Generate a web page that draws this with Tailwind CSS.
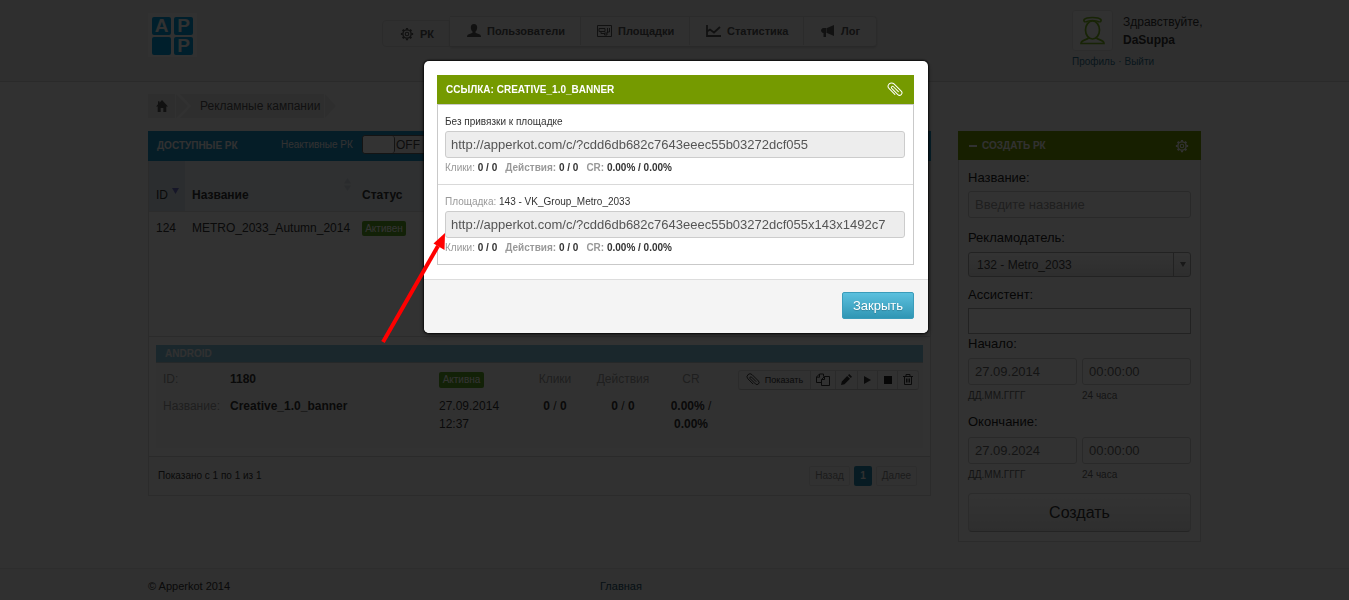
<!DOCTYPE html>
<html lang="ru">
<head>
    <meta charset="UTF-8">
    <meta name="viewport" content="width=device-width, initial-scale=1.0">
    <title>Apperkot - Рекламные кампании</title>
    <script src="https://cdn.jsdelivr.net/npm/@tailwindcss/browser@4"></script>
</head>
<body class="bg-[#f5f5f5] font-['Liberation_Sans',Arial,sans-serif] text-[12px] leading-[18px] text-[#333] overflow-hidden">

    <!-- shared icons -->
    <svg class="hidden">
        <symbol id="clip" viewBox="0 0 16 16">
            <path transform="rotate(45 8 8)" d="M11.500 6.800H4.600a1.200 1.200 0 0 0 0 2.400h8.600a2.400 2.400 0 0 0 0-4.800H3a3.400 3.400 0 0 0 0 6.800h8" fill="none" stroke="currentColor" stroke-linecap="round"/>
        </symbol>
        <symbol id="gear" viewBox="0 0 16 16">
            <circle cx="8" cy="8" r="4.700" fill="none" stroke="currentColor" stroke-width="1.600"/>
            <circle cx="8" cy="8" r="2" fill="none" stroke="currentColor" stroke-width="1.300"/>
            <g stroke="currentColor" stroke-width="2.400">
                <path d="M8 1v2M8 13v2M1 8h2M13 8h2M3.050 3.050l1.400 1.400M11.550 11.550l1.400 1.400M3.050 12.950l1.400-1.400M11.550 4.450l1.400-1.400"/>
            </g>
        </symbol>
    </svg>

    <header class="bg-[#ebebeb] border-b border-[#d2d2d2] h-[82px]">
        <div class="max-w-[1053px] mx-auto flex items-start">
            <a href="#" class="w-[234px] pt-[13px]" aria-label="Apperkot">
                <span class="grid grid-cols-2 gap-x-[3px] gap-y-[2px] w-[49px] h-[44px] p-1 bg-[#f2f2f2] text-[#f2f2f2] font-bold text-[19px] leading-[18px] text-center">
                    <span class="bg-[#009cda] rounded-[2px]">A</span>
                    <span class="bg-[#009cda] rounded-[2px]">P</span>
                    <span class="bg-[#009cda] rounded-[2px]"></span>
                    <span class="bg-[#009cda] rounded-[2px]">P</span>
                </span>
            </a>

            <nav class="flex items-end pt-4 text-[11px] font-bold text-[#555]">
                <a href="#" class="flex items-center gap-[6px] w-[68px] h-[27px] pl-[17px] border border-[#d8d8d8] rounded-l bg-[#e9e9e9]">
                    <svg class="w-[14px] h-[14px]"><use href="#gear"/></svg>РК
                </a>
                <div class="flex h-[31px] border border-[#d8d8d8] border-b-[#cdcdcd] border-l-0 rounded-r bg-[#eee] shadow-sm">
                    <a href="#" class="flex items-center gap-[6px] w-[131px] h-[28px] pl-[17px] border-r border-[#d8d8d8]">
                        <svg class="w-[14px] h-[14px]" viewBox="0 0 14 14" fill="currentColor"><path d="M7 0c2.200 0 3.300 1.500 3.200 3.700C10.100 5.600 9.200 7 8.500 7.500v1.200c1 .7 3.800 1.100 4.700 2.100.6.700.8 1.300.8 2.200H0c0-.9.200-1.500.8-2.200.9-1 3.700-1.400 4.700-2.100V7.500C4.800 7 3.900 5.600 3.800 3.700 3.700 1.500 4.800 0 7 0z"/></svg>
                        Пользователи
                    </a>
                    <a href="#" class="flex items-center gap-[6px] w-[109px] h-[28px] pl-4 border-r border-[#d8d8d8]">
                        <svg class="w-[15px] h-3" viewBox="0 0 15 12" fill="none" stroke="currentColor"><path d="M.5.500h14v11H.5zM2 3.500h6v3H2zM4 6.500v2h3M7.500 8h2.500v2H7.500zM10.500 3v5M12.500 3v4h-2"/></svg>
                        Площадки
                    </a>
                    <a href="#" class="flex items-center gap-[6px] w-[114px] h-[28px] pl-4 border-r border-[#d8d8d8]">
                        <svg class="w-[15px] h-3" viewBox="0 0 15 12" fill="none" stroke="currentColor" stroke-width="1.800"><path d="M1 0v11h14"/><path d="M1 6.500l3-2 4 3 6-5.500"/></svg>
                        Статистика
                    </a>
                    <a href="#" class="flex items-center gap-[6px] w-[72px] h-[28px] pl-[17px]">
                        <svg class="w-[14px] h-[14px]" viewBox="0 0 14 14" fill="currentColor"><path d="M13 1v11L6 9V4zM5.500 4v5H5v4H2.500V9C-.8 8.500-.8 4.500 2.500 4z"/></svg>
                        Лог
                    </a>
                </div>
            </nav>

            <div class="ml-auto w-[129px] pt-[10px]">
                <div class="flex gap-[10px]">
                    <div class="w-[41px] h-[41px] shrink-0 border border-[#ddd] rounded-[3px] bg-[#f2f2f2] flex items-center justify-center text-[#78b41e]">
                        <svg class="w-[25px] h-[29px]" viewBox="0 0 25 29" fill="none" stroke="currentColor" stroke-width="1.700">
                            <path d="M5.500 6C2.500 5 3 1.500 12.500 1.500S22.500 5 19.500 6"/>
                            <path d="M5.500 6c4-1.700 10-1.700 14 0"/>
                            <ellipse cx="12.500" cy="14" rx="7" ry="9"/>
                            <path d="M8.500 22c-1 2-7.500 1.500-7.500 5.500h23c0-4-6.500-3.500-7.500-5.500"/>
                        </svg>
                    </div>
                    <div class="pt-[3px]">Здравствуйте,<br><b>DaSuppa</b></div>
                </div>
                <div class="text-[10px] leading-[22px] text-[#2f6f8c] flex gap-[3px]"><a href="#">Профиль</a>·<a href="#">Выйти</a></div>
            </div>
        </div>
    </header>

    <div class="max-w-[1053px] mx-auto pt-3 h-[486px]">
        <nav class="flex h-6 text-[#555]" aria-label="Навигация">
            <a href="#" class="w-[27px] bg-[#e6e6e6] flex items-center justify-center" aria-label="Домой">
                <svg class="w-3 h-3" viewBox="0 0 12 12" fill="currentColor"><path d="M6 0l6 6.500h-1.700V12H7.300V8H4.700v4H1.700V6.500H0L2 4.300V1.200h1.500v1.500z"/></svg>
            </a>
            <svg class="w-[22px] h-6" viewBox="0 0 22 24" fill="#e6e6e6"><path d="M1 0l12 12L1 24zM5 0h17v24H5l11-12z"/></svg>
            <a href="#" class="bg-[#e6e6e6] w-[127px] leading-6 pl-[3px]">Рекламные кампании</a>
            <svg class="w-3 h-6" viewBox="0 0 12 24" fill="#e6e6e6"><path d="M1 0l11 12L1 24z"/></svg>
        </nav>

        <main class="flex items-start gap-[27px] mt-[13px]">
            <!-- campaigns -->
            <section class="flex-1">
                <div class="h-[30px] bg-[#1a8fc4] text-[#f5f5f5] flex items-center pl-[9px] text-[10px]">
                    <h2 class="font-bold w-[124px]">ДОСТУПНЫЕ РК</h2>
                    <label for="inactive" class="w-[81px] pb-[3px]">Неактивные РК</label>
                    <input id="inactive" type="checkbox" class="sr-only">
                    <label for="inactive" class="flex w-[90px] h-[19px] mb-1 rounded-[3px] border border-[#666] bg-[#f0f0f0] text-[#444] text-[12px]">
                        <span class="w-[32px] border-r border-[#666] bg-white rounded-[3px] mr-px"></span>OFF
                    </label>
                </div>
                <div class="border border-t-0 border-[#d5d5d5] bg-[#fafafa]">
                    <table class="w-full table-fixed text-left">
                        <thead>
                            <tr class="h-[50px] bg-[#e8eff3] border-b border-[#ddd] align-bottom">
                                <th class="w-[36px] pl-[7px] pb-[7px] bg-[#d5e2ea] font-normal">
                                    <span class="flex gap-1">ID <svg class="w-[7px] h-[6px] mt-[2px]" viewBox="0 0 7 6"><path d="M0 0h7L3.500 6z" fill="#7070c8"/></svg></span>
                                </th>
                                <th class="w-[170px] pl-[7px] pb-[7px]">
                                    <span class="flex justify-between pr-[4px]">Название
                                        <svg class="w-[7px] h-[13px] -mt-2" viewBox="0 0 7 13" fill="#d2d8e2"><path d="M0 5.500h7L3.500 0zM0 7.500h7L3.500 13z"/></svg>
                                    </span>
                                </th>
                                <th class="pl-[7px] pb-[7px]">Статус</th>
                            </tr>
                        </thead>
                        <tbody>
                            <tr class="h-[125px] align-top border-b border-[#d5d5d5]">
                                <td class="pl-[7px] pt-[7px]">124</td>
                                <td class="pl-[7px] pt-[7px]">METRO_2033_Autumn_2014</td>
                                <td class="pl-[7px] pt-[9px]"><span class="block w-[44px] h-[15px] leading-[15px] text-center rounded-[2px] bg-[#5da423] text-white text-[10px]">Активен</span></td>
                            </tr>
                        </tbody>
                    </table>

                    <div class="mx-[7px] my-2 h-[103px] bg-[#f6f6f6]">
                        <h3 class="h-[18px] bg-[#82c3dc] text-[#f2f2f2] font-bold text-[10px] pl-[9px] border-b border-[#b9c5ca]">ANDROID</h3>
                        <div class="flex items-start pt-[7px]">
                            <dl class="grid grid-cols-[67px_209px] gap-y-[9px] pl-[7px]">
                                <dt class="text-[#999]">ID:</dt><dd class="font-bold">1180</dd>
                                <dt class="text-[#999]">Название:</dt><dd class="font-bold">Creative_1.0_banner</dd>
                            </dl>
                            <div class="w-[82px]">
                                <span class="block w-[45px] h-4 leading-4 mt-[2px] mb-[9px] text-center rounded-[2px] bg-[#5da423] text-white text-[10px]">Активна</span>
                                27.09.2014<br>12:37
                            </div>
                            <table class="text-center">
                                <thead>
                                    <tr class="text-[#999] align-top">
                                        <th class="w-[68px] h-[27px] font-normal">Клики</th>
                                        <th class="w-[68px] font-normal">Действия</th>
                                        <th class="w-[68px] font-normal">CR</th>
                                    </tr>
                                </thead>
                                <tbody>
                                    <tr class="font-bold align-top">
                                        <td>0 <i class="font-normal not-italic">/</i> 0</td>
                                        <td>0 <i class="font-normal not-italic">/</i> 0</td>
                                        <td>0.00% <i class="font-normal not-italic">/</i><br>0.00%</td>
                                    </tr>
                                </tbody>
                            </table>
                            <div class="ml-auto mr-1 flex h-5 text-[9px] border border-[#d8d8d8] border-b-[#c4c4c4] rounded-[3px] divide-x divide-[#d0d0d0] bg-[#f2f2f2]">
                                <button class="w-[72px] flex items-center justify-center gap-[5px]"><svg class="w-[14px] h-[14px]"><use href="#clip"/></svg>Показать</button>
                                <button class="w-[25px] flex items-center justify-center" aria-label="Копировать">
                                    <svg class="w-[14px] h-[13px]" viewBox="0 0 14 13" fill="none" stroke="currentColor"><path d="M5.500 9.500H.5V4L3.500 1h4v2.500M3.500 1v3.200H.5M5.500 12.500v-6l3-3h5v9zM8.500 3.500v3h-3"/></svg>
                                </button>
                                <button class="w-[22px] flex items-center justify-center" aria-label="Изменить">
                                    <svg class="w-[11px] h-[11px]" viewBox="0 0 11 11" fill="currentColor"><path d="M0 11l.8-3.500L6.200 2 9 4.800l-5.500 5.400zM7 1.200L8.200 0 11 2.800 9.800 4z"/></svg>
                                </button>
                                <button class="w-5 flex items-center justify-center" aria-label="Запустить">
                                    <svg class="w-[7px] h-2" viewBox="0 0 7 8" fill="currentColor"><path d="M0 0l7 4-7 4z"/></svg>
                                </button>
                                <button class="w-5 flex items-center justify-center" aria-label="Остановить"><span class="w-2 h-2 bg-[#222]"></span></button>
                                <button class="w-5 flex items-center justify-center" aria-label="Удалить">
                                    <svg class="w-[10px] h-[11px]" viewBox="0 0 10 11" fill="none" stroke="currentColor"><path d="M0 2.500h10M3 2.500v-2h4v2M1.500 2.500v8h7v-8M3.500 4.500v4M5 4.500v4M6.500 4.500v4"/></svg>
                                </button>
                            </div>
                        </div>
                    </div>

                    <div class="h-[39px] border-t border-[#d0d0d0] bg-[#f5f5f5] flex items-center pl-[9px] pr-[13px] text-[10px]">
                        <span>Показано с 1 по 1 из 1</span>
                        <div class="ml-auto flex gap-1 text-[#888]">
                            <button class="w-[41px] h-5 border border-[#e0e0e0] rounded-[2px]">Назад</button>
                            <button class="w-[18px] h-5 rounded-[2px] bg-[#2589ae] text-[#eee] font-bold">1</button>
                            <button class="w-[41px] h-5 border border-[#e0e0e0] rounded-[2px]">Далее</button>
                        </div>
                    </div>
                </div>
            </section>

            <!-- new campaign -->
            <section class="w-[243px]">
                <div class="h-[29px] bg-[#759a00] text-[#f5f5f5] flex items-center pl-[11px] pr-3 text-[10px]">
                    <span class="w-2 h-[2px] bg-current mr-[5px]"></span>
                    <h2 class="font-bold">СОЗДАТЬ РК</h2>
                    <svg class="w-[14px] h-[14px] ml-auto"><use href="#gear"/></svg>
                </div>
                <form class="border border-t-0 border-[#d5d5d5] bg-[#fafafa] px-[9px] pt-2 pb-[9px] text-[#222]">
                    <label for="name" class="block leading-5 mb-[3px] text-[13px]">Название:</label>
                    <input id="name" type="text" placeholder="Введите название" class="block w-full h-[27px] px-[6px] mb-[10px] border border-[#ccc] rounded-[3px] text-[13px] placeholder-[#999]">
                    <label for="advertiser" class="block leading-5 mb-1 text-[13px]">Рекламодатель:</label>
                    <div class="grid mb-2">
                        <select id="advertiser" class="col-start-1 row-start-1 appearance-none w-full h-[25px] px-2 border border-[#aaa] rounded-[3px] bg-linear-to-b from-white to-[#e4e4e4] text-[#444] text-[12px]">
                            <option>132 - Metro_2033</option>
                        </select>
                        <span class="col-start-1 row-start-1 justify-self-end w-[18px] h-[25px] border-l border-[#aaa] flex items-center justify-center pointer-events-none">
                            <svg class="w-[6px] h-[5px]" viewBox="0 0 6 5" fill="#777"><path d="M0 0h6L3 5z"/></svg>
                        </span>
                    </div>
                    <label for="assistant" class="block leading-5 mb-[3px] text-[13px]">Ассистент:</label>
                    <input id="assistant" type="text" class="block w-full h-[26px] px-2 border border-[#aaa] bg-white">
                    <label for="start" class="block leading-5 mb-1 text-[13px]">Начало:</label>
                    <div class="grid grid-cols-2 gap-x-[5px] gap-y-[3px] text-[10px] leading-4 text-[#666] mb-2">
                        <input id="start" type="text" value="27.09.2014" class="w-full h-[27px] px-[6px] border border-[#ccc] rounded-[3px] text-[13px]">
                        <input type="text" value="00:00:00" aria-label="Время начала" class="w-full h-[27px] px-[6px] border border-[#ccc] rounded-[3px] text-[13px]">
                        <span>ДД.ММ.ГГГГ</span><span>24 часа</span>
                    </div>
                    <label for="end" class="block leading-5 mb-[5px] text-[13px]">Окончание:</label>
                    <div class="grid grid-cols-2 gap-x-[5px] gap-y-[3px] text-[10px] leading-4 text-[#666] mb-[10px]">
                        <input id="end" type="text" value="27.09.2024" class="w-full h-[27px] px-[6px] border border-[#ccc] rounded-[3px] text-[13px]">
                        <input type="text" value="00:00:00" aria-label="Время окончания" class="w-full h-[27px] px-[6px] border border-[#ccc] rounded-[3px] text-[13px]">
                        <span>ДД.ММ.ГГГГ</span><span>24 часа</span>
                    </div>
                    <button type="button" class="w-full h-[39px] border border-[#d5d5d5] border-b-[#b3b3b3] rounded bg-linear-to-b from-white to-[#e6e6e6] text-[16px] text-[#333]">Создать</button>
                </form>
            </section>
        </main>
    </div>

    <footer class="h-8 border-t border-[#dfdfdf] bg-[#ededed] text-[11px]">
        <div class="max-w-[1053px] mx-auto pt-2 flex">
            <span class="w-[452px]">© Apperkot 2014</span>
            <a href="#" class="text-[#1d5468]">Главная</a>
        </div>
    </footer>

    <!-- backdrop + modal -->
    <div class="fixed inset-0 bg-black/80"></div>
    <div class="fixed inset-0 flex items-start justify-center pt-[61px] pl-[3px]">
        <div role="dialog" aria-modal="true" aria-labelledby="modal-title" class="w-[504px] bg-white rounded-[5px] overflow-hidden shadow-[0_0_2px_1px_rgba(0,0,0,0.8),0_3px_7px_rgba(0,0,0,0.3)]">
            <div class="px-[13px] py-[14px]">
                <div class="h-[29px] bg-[#759a00] text-white flex items-center pl-[9px] pr-[11px] mr-px">
                    <h2 id="modal-title" class="font-bold text-[10px]">ССЫЛКА: CREATIVE_1.0_BANNER</h2>
                    <svg class="w-4 h-4 ml-auto"><use href="#clip"/></svg>
                </div>
                <div class="mr-px border border-[#c9c9c9] divide-y divide-[#d9d9d9] text-[10px]">
                    <div class="px-[7px] pt-2 pb-[7px]">
                        <label for="link1" class="block">Без привязки к площадке</label>
                        <input id="link1" type="text" readonly value="http://apperkot.com/c/?cdd6db682c7643eeec55b03272dcf055" class="block w-[460px] h-[27px] px-[5px] border border-[#ccc] rounded-[3px] bg-[#ededed] text-[#555] text-[13px]">
                        <p class="flex gap-2 font-bold pt-[1px]">
                            <span><span class="text-[#999] font-normal">Клики:</span> 0 / 0</span>
                            <span><span class="text-[#999]">Действия:</span> 0 / 0</span>
                            <span><span class="text-[#999]">CR:</span> 0.00% / 0.00%</span>
                        </p>
                    </div>
                    <div class="px-[7px] pt-2 pb-[7px]">
                        <label for="link2" class="block"><span class="text-[#999]">Площадка:</span> 143 - VK_Group_Metro_2033</label>
                        <input id="link2" type="text" readonly value="http://apperkot.com/c/?cdd6db682c7643eeec55b03272dcf055x143x1492c7" class="block w-[460px] h-[27px] px-[5px] border border-[#ccc] rounded-[3px] bg-[#ededed] text-[#555] text-[13px]">
                        <p class="flex gap-2 font-bold pt-[1px]">
                            <span><span class="text-[#999] font-normal">Клики:</span> 0 / 0</span>
                            <span><span class="text-[#999]">Действия:</span> 0 / 0</span>
                            <span><span class="text-[#999]">CR:</span> 0.00% / 0.00%</span>
                        </p>
                    </div>
                </div>
            </div>
            <div class="h-[54px] border-t border-[#ddd] bg-[#f4f4f4] flex justify-end pt-3 pr-[14px]">
                <button class="w-[72px] h-[27px] rounded-[2px] border border-[#3a9cba] bg-linear-to-b from-[#5bc0de] to-[#2f96b4] text-white text-[13px] text-shadow-xs">Закрыть</button>
            </div>
        </div>
    </div>

    <!-- pointer to the link with the placement -->
    <svg class="absolute left-[380px] top-[230px] w-[70px] h-[116px] pointer-events-none" viewBox="0 0 70 116">
        <path d="M3 112L58 16" stroke="#f00" stroke-width="4"/>
        <path d="M65 3L64.500 20 53.500 13.500z" fill="#f00"/>
    </svg>
</body>
</html>
